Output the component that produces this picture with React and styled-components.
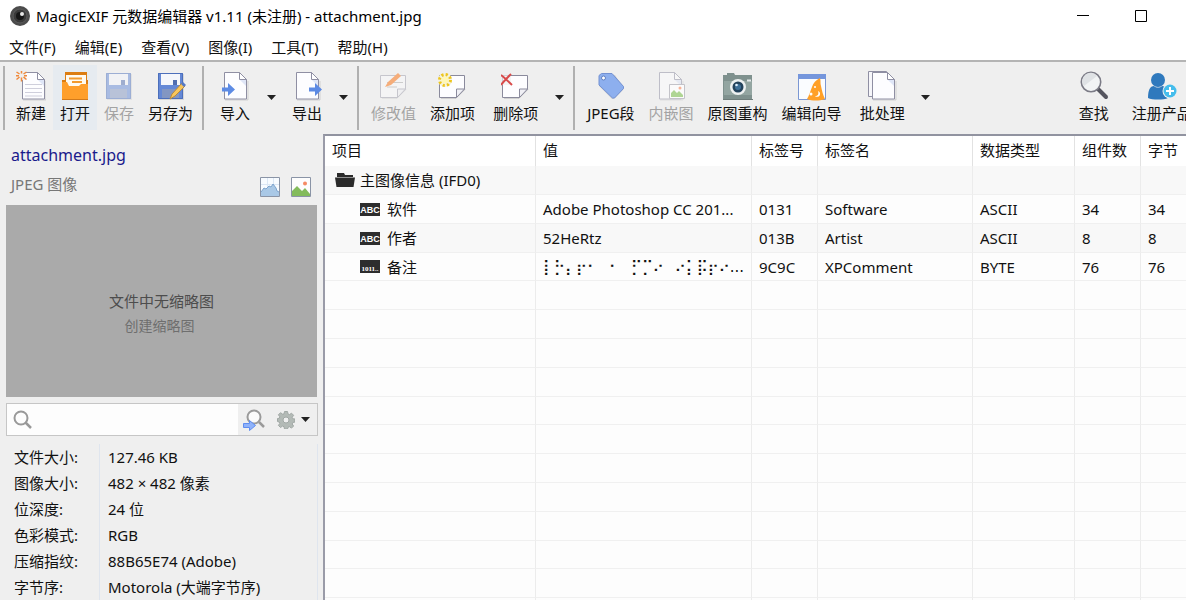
import React from "react";
import styled, { createGlobalStyle, css } from "styled-components";

const Global = createGlobalStyle`
  * { box-sizing: border-box; }
  body {
    margin: 0;
    background: #efefef;
    color: #111;
    font: 15px/20px "Noto Sans", "Noto Sans CJK SC", sans-serif;
  }
  button, input { font: inherit; color: inherit; }
`;

const Window = styled.div`
  height: 100vh;
  display: flex;
  flex-direction: column;
  overflow: hidden;
`;

const plainButton = css`
  margin: 0;
  padding: 0;
  border: 0;
  background: transparent;
  white-space: nowrap;
`;

const TitleBar = styled.header`
  flex: none;
  display: flex;
  align-items: center;
  height: 31px;
  padding: 0 16px 0 9px;
  background: #fff;
`;

const Title = styled.h1`
  margin: 0 0 0 5px;
  font-size: 15px;
  line-height: 20px;
  font-weight: 400;
  color: #000;
  flex: 1;
  white-space: nowrap;
`;

const CaptionButton = styled.button`
  ${plainButton}
  width: 58px;
  height: 31px;
  display: grid;
  place-items: center;
`;

const MenuBar = styled.nav`
  flex: none;
  display: flex;
  gap: 19px;
  height: 29px;
  padding: 2px 9px 0;
  align-items: center;
  background: #fff;
`;

const MenuItem = styled.button`
  ${plainButton}
`;

const Toolbar = styled.div`
  flex: none;
  display: flex;
  height: 74px;
  padding: 3px 0 4px 3px;
  border-top: 2px solid #b4b4b4;
  overflow: hidden;
`;

const Separator = styled.span`
  flex: none;
  width: 2px;
  margin: 1px ${(p) => p.$after}px 0 ${(p) => p.$before}px;
  background: #b0b0b0;
`;

const ToolButton = styled.button`
  ${plainButton}
  flex: none;
  display: flex;
  flex-direction: column;
  align-items: center;
  padding: 6px 7px 0;
  margin-left: ${(p) => p.$gap || 0}px;
  background: ${(p) => (p.$hot ? "#e6ebf0" : "transparent")};
  color: ${(p) => (p.disabled ? "#a3a3a3" : "#111")};
  svg { display: block; margin-bottom: 2px; }
`;

const DropButton = styled.button`
  ${plainButton}
  flex: none;
  width: 28px;
  display: grid;
  place-items: center;
`;

const Spacer = styled.span`
  flex: none;
  width: 132px;
`;

const Main = styled.main`
  flex: 1;
  min-height: 0;
  display: flex;
`;

const Side = styled.aside`
  flex: none;
  width: 323px;
  padding: 11px 5px 0 6px;
  overflow: hidden;
`;

const FileHead = styled.div`
  display: flex;
  justify-content: space-between;
  align-items: flex-end;
  height: 60px;
  padding: 0 6px 7px 5px;
`;

const FileName = styled.h2`
  margin: 0 0 9px;
  font-size: 16px;
  line-height: 20px;
  font-weight: 400;
  color: #1a1a8c;
`;

const FileKind = styled.p`
  margin: 0 0 4px;
  color: #777;
`;

const ViewButtons = styled.div`
  display: flex;
  gap: 10px;
`;

const ViewButton = styled.button`
  ${plainButton}
  svg { display: block; }
`;

const Thumb = styled.section`
  height: 192px;
  margin-right: 1px;
  background: #aaa;
  display: flex;
  flex-direction: column;
  justify-content: center;
  align-items: center;
  gap: 5px;
  padding-top: 24px;
  color: #4d4d4d;
`;

const CreateThumb = styled.button`
  ${plainButton}
  font-size: 14px;
  color: #6e6e6e;
  margin-right: 4px;
`;

const SearchBox = styled.div`
  display: flex;
  align-items: center;
  height: 33px;
  margin-top: 6px;
  border: 1px solid #c6c6c6;
`;

const SearchField = styled.label`
  flex: 1;
  min-width: 0;
  height: 31px;
  display: flex;
  align-items: center;
  gap: 6px;
  padding-left: 6px;
  background: #fdfdfd;
`;

const SearchInput = styled.input`
  flex: 1;
  min-width: 0;
  border: 0;
  padding: 0;
  outline: 0;
  background: transparent;
`;

const SearchTool = styled.button`
  ${plainButton}
  display: flex;
  align-items: center;
  gap: 6px;
  padding: 0 7px 0 5px;
`;

const Facts = styled.table`
  width: 312px;
  margin-top: 8px;
  border-collapse: separate;
  border-spacing: 0;
  border-right: 1px solid #dfe5ee;
  th, td {
    height: 26px;
    padding: 0 0 0 8px;
    text-align: left;
    font-weight: 400;
    white-space: nowrap;
  }
  th { width: 94px; border-right: 1px solid #dfe5ee; }
`;

const GridPanel = styled.section`
  flex: 1;
  min-width: 0;
  overflow: hidden;
  border-left: 2px solid #9a9ba8;
  border-top: 2px solid #9193a0;
  background: #fdfdfd;
`;

const Grid = styled.table`
  width: 100%;
  table-layout: fixed;
  border-collapse: separate;
  border-spacing: 0;
  th, td {
    padding: 0 0 0 7px;
    text-align: left;
    font-weight: 400;
    white-space: nowrap;
    overflow: hidden;
    border-right: 1px solid #ececec;
  }
  th { height: 30px; padding-bottom: 2px; background: #fff; border-right-color: #e2e2e2; }
  th:last-child, td:last-child { border-right: 0; }
`;

const Row = styled.tr`
  background: ${(p) => (p.$shaded ? "#f8f8f8" : "#fdfdfd")};
  td { height: 29px; border-bottom: 1px solid #f0f0f0; }
  &:nth-child(5n + 4) td { height: 28px; }
`;

const Tag = styled.span`
  display: flex;
  align-items: center;
  gap: ${(p) => (p.$child ? 7 : 5)}px;
  padding-left: ${(p) => (p.$child ? 28 : 3)}px;
`;

const Braille = styled.span`
  font-family: "DejaVu Sans", "Noto Sans", sans-serif;
`;

const Icon = ({ w = 30, h = 30, children }) => (
  <svg width={w} height={h} viewBox={`0 0 ${w} ${h}`} fill="none" aria-hidden="true">
    {children}
  </svg>
);

const Caret = () => (
  <Icon w={9} h={5}>
    <path d="M0 0h9L4.500 5z" fill="#222" />
  </Icon>
);

const Page = ({ x = 4, lines }) => (
  <g transform={`translate(${x} 1)`}>
    <path d="M1 28h23V9" stroke="#000" strokeOpacity=".12" />
    <path d="M.5.500h15l7 7v19.500H.5z" fill="#fdfdff" stroke="#8f8fa3" />
    <path d="M16 8l6 6V8z" fill="#dfe6f7" />
    <path d="M15.500.500v7h7z" fill="#fff" stroke="#8f8fa3" />
    {lines && <path d="M3 12.500h17M3 16.500h17M3 20.500h17M3 24h17" stroke="#cfcfdc" />}
  </g>
);

const Note = () => (
  <g>
    <path d="M3 27.500h15l9-9" stroke="#000" strokeOpacity=".13" />
    <path d="M1.500 4.500h25V18l-8 8.500h-17z" fill="#fdfdff" stroke="#8a8a9c" />
    <path d="M18.500 26.500V18h8z" fill="#f0f0f5" stroke="#8a8a9c" />
  </g>
);

const BlueArrow = ({ x }) => (
  <path transform={`translate(${x} 0)`} d="M0 16.500h6V12l7 6.500-7 6.500v-4.500H0z" fill="#5d8be4" />
);

const Floppy = () => (
  <>
    <path d="M3 3h25v26H3z" fill="#000" opacity=".1" />
    <path d="M2 2h25v26H2z" fill="#6488d6" />
    <path d="M2.500 2.500h24v25h-24z" stroke="#4c6fbb" />
    <path d="M5 3h19v11H5z" fill="#f4f6fb" />
    <path d="M17 9h4v5h-4z" fill="#4f6db0" />
    <path d="M6 18h17v9H6z" fill="#8296c2" />
  </>
);

const icons = {
  new: (
    <Icon>
      <Page x={6} lines />
      <path d="M0 0h10v9H0z" fill="#efefef" />
      <path d="M5.500-.500v3M5.500 6.500v4M.500 1l3 2M7.500 6l3 2.500M10.500 1l-3 2M3.500 6L.5 8.500M0 4.800h3M8 4.800h3" stroke="#f08a3c" strokeWidth="1.500" />
    </Icon>
  ),
  open: (
    <Icon>
      <path d="M5 1h22v8h1v20H2V9h3z" fill="#dc7d12" />
      <path d="M6 4h20v12H6z" fill="#fffaf0" />
      <path d="M9 7.500h13M12 11h10" stroke="#f29a2e" strokeWidth="2" />
      <path d="M2 11h5l2 4h10l2-2h7v16H2z" fill="#ff9f2b" />
      <path d="M2 28.500h26" stroke="#d27a1b" />
    </Icon>
  ),
  save: (
    <Icon>
      <g opacity=".5"><Floppy /></g>
    </Icon>
  ),
  saveAs: (
    <Icon>
      <Floppy />
      <path d="M14 28l2-5L26 12l3 3-10 10z" fill="#f8c65c" stroke="#b98a3a" />
      <path d="M25 13l2-2 3 3-2 2z" fill="#5479c8" />
    </Icon>
  ),
  import: (
    <Icon><Page x={4} /><BlueArrow x={2} /></Icon>
  ),
  export: (
    <Icon><Page x={4} /><BlueArrow x={17} /></Icon>
  ),
  edit: (
    <Icon>
      <g opacity=".4"><Note /><path d="M8 11.500h16M8 16h10" stroke="#999" /></g>
      <path d="M6 16l3-5L19 2l3 3-10 9z" fill="#f5ad7a" />
    </Icon>
  ),
  add: (
    <Icon>
      <Note />
      <circle cx="7" cy="9" r="7" fill="#f4f1dc" />
      <circle cx="7" cy="9" r="3.500" fill="#fff7b5" />
      <circle cx="7" cy="9" r="5.500" stroke="#edc51c" strokeWidth="3" strokeDasharray="2.160 2.160" />
    </Icon>
  ),
  remove: (
    <Icon>
      <Note />
      <path d="M0 3h10v11H0z" fill="#efefef" opacity=".7" />
      <path d="M0 4c4 3 7 6 11 10M10 3C6 7 3 10 0 14" stroke="#d84a4a" strokeWidth="2" />
    </Icon>
  ),
  segment: (
    <Icon>
      <path d="M4 5l4-2 11 1 9 13-1 2-9 9h-2L3 15z" fill="#000" opacity=".12" />
      <path d="M3 4.500L5.500 2.500h10.500L27.500 15.500v2L18.500 27h-2L3 14z" fill="#8dafee" stroke="#7391d2" />
      <circle cx="7.500" cy="7" r="2" fill="#fff" stroke="#6280c0" />
    </Icon>
  ),
  embedded: (
    <Icon>
      <g opacity=".5"><Page x={3} /></g>
      <path d="M13.500 13.500h15v14h-15z" fill="#fbfbfb" stroke="#c3c3c9" />
      <path d="M15 26v-4l3-3 3 3 2-2 4 4v2z" fill="#afd594" />
      <circle cx="24" cy="17" r="1.500" fill="#f7b397" />
    </Icon>
  ),
  rebuild: (
    <Icon>
      <path d="M4 2h7l1 2h17v25H0V4h4z" fill="#7f918e" />
      <path d="M1 10h28v14H1z" fill="#93a5a1" />
      <path d="M0 28.500h30" stroke="#6e7c7a" />
      <circle cx="15" cy="16" r="8" fill="#eef1f1" />
      <circle cx="15" cy="16" r="5.500" fill="#24435c" />
      <circle cx="15" cy="16" r="3" fill="#3f7199" />
      <circle cx="13.500" cy="14" r="1.300" fill="#dcefff" />
      <path d="M24 9.500h4" stroke="#e5eaea" strokeWidth="2" />
    </Icon>
  ),
  wizard: (
    <Icon>
      <path d="M1.500 3.500h27v25h-27z" fill="#fafcff" stroke="#7b97d3" />
      <path d="M1 3h28v5H1z" fill="#7596dc" />
      <path d="M10 28c2-3 3-7 5-12 1-4 4-7 8-9 1 3 0 5 1 8 1 5 2 9 4 13-6 2-13 2-18 0z" fill="#ffa028" />
      <circle cx="14" cy="23" r="1.500" fill="#fff" />
      <circle cx="18" cy="16" r="1" fill="#fff" />
      <path d="M21 20a3 3 0 1 1-3 5c3 0 4-2 3-5z" fill="#fff" />
    </Icon>
  ),
  batch: (
    <Icon>
      <path d="M1.500.500h18v25h-18z" fill="#f6f6fa" stroke="#8f8fa3" />
      <Page x={5} />
    </Icon>
  ),
  find: (
    <Icon>
      <path d="M19 18l8 8" stroke="#55555f" strokeWidth="4" strokeLinecap="round" />
      <circle cx="12" cy="11" r="9.700" fill="#f2f4f5" stroke="#7b7b86" strokeWidth="1.600" />
      <path d="M5 15A8 8 0 0 1 18 5z" fill="#dfe2e5" />
    </Icon>
  ),
  register: (
    <Icon>
      <circle cx="11" cy="9" r="7" fill="#2f79bd" />
      <path d="M1 27c0-8 2-12 6-12 2 2 6 2 8 0 4 0 6 4 6 12-4 2-16 2-20 0z" fill="#2f79bd" />
      <circle cx="23" cy="20" r="7.500" fill="#efefef" />
      <circle cx="23" cy="20" r="6.500" fill="#45bdec" />
      <path d="M23 16v8M19 20h8" stroke="#fff" strokeWidth="2" />
    </Icon>
  ),
};

const tools = [
  { sep: true, before: 0, after: 4 },
  { icon: "new", text: "新建" },
  { icon: "open", text: "打开", hot: true },
  { icon: "save", text: "保存", off: true },
  { icon: "saveAs", text: "另存为" },
  { sep: true, before: 2, after: 5 },
  { icon: "import", text: "导入", gap: 4, drop: true },
  { icon: "export", text: "导出", drop: true },
  { sep: true, before: 0, after: 5 },
  { icon: "edit", text: "修改值", off: true },
  { icon: "add", text: "添加项" },
  { icon: "remove", text: "删除项", gap: 4, drop: true },
  { sep: true, before: 0, after: 5 },
  { icon: "segment", text: "JPEG段" },
  { icon: "embedded", text: "内嵌图", off: true },
  { icon: "rebuild", text: "原图重构" },
  { icon: "wizard", text: "编辑向导" },
  { icon: "batch", text: "批处理", gap: 4, drop: true },
  { spacer: true },
  { icon: "find", text: "查找" },
  { icon: "register", text: "注册产品", gap: 9 },
];

const FolderIcon = () => (
  <Icon w={20} h={14}>
    <path d="M2 0h7l1 2h8v2H2z" fill="#2b2b2b" />
    <path d="M0 4.500h20L18.500 14h-17z" fill="#2b2b2b" />
  </Icon>
);

const TypeIcon = ({ text }) => (
  <svg width="20" height="13" viewBox="0 0 20 13" aria-hidden="true">
    <rect width="20" height="13" fill="#2d2d2d" />
    <text
      x="10"
      y={text === "ABC" ? 10 : 11}
      textAnchor="middle"
      fill="#fff"
      fontFamily={text === "ABC" ? "Liberation Sans, sans-serif" : "Liberation Serif, serif"}
      fontWeight="700"
      fontSize={text === "ABC" ? 9 : 7}
    >
      {text}
    </text>
  </svg>
);

const rows = [
  { folder: true, cells: ["主图像信息 (IFD0)", "", "", "", "", "", ""] },
  { type: "ABC", cells: ["软件", "Adobe Photoshop CC 201...", "0131", "Software", "ASCII", "34", "34"] },
  { type: "ABC", cells: ["作者", "52HeRtz", "013B", "Artist", "ASCII", "8", "8"] },
  {
    type: "1011..",
    cells: ["备注", <Braille key="b">⡇⡓⡄⡖⠂⠀⠂⠀⡋⡉⠔⠀⠔⡅⡯⡖⠔...</Braille>, "9C9C", "XPComment", "BYTE", "76", "76"],
  },
];

const facts = [
  ["文件大小:", "127.46 KB"],
  ["图像大小:", "482 × 482 像素"],
  ["位深度:", "24 位"],
  ["色彩模式:", "RGB"],
  ["压缩指纹:", "88B65E74 (Adobe)"],
  ["字节序:", "Motorola (大端字节序)"],
];

export default function App() {
  return (
    <Window>
      <Global />
      <TitleBar>
        <Icon w={22} h={22}>
          <circle cx="11" cy="11" r="10" fill="#4b4b4b" />
          <circle cx="11" cy="11" r="7" fill="#3a3a3a" stroke="#5c5c5c" />
          <circle cx="11" cy="11" r="4" fill="#161616" />
          <circle cx="13" cy="9" r="2" fill="#e8e8e8" />
        </Icon>
        <Title>MagicEXIF 元数据编辑器 v1.11 (未注册) - attachment.jpg</Title>
        <CaptionButton aria-label="最小化">
          <Icon w={12} h={12}><path d="M0 5.500h12" stroke="#000" /></Icon>
        </CaptionButton>
        <CaptionButton aria-label="最大化">
          <Icon w={12} h={12}><path d="M.500.500h11v11H.5z" stroke="#000" /></Icon>
        </CaptionButton>
      </TitleBar>
      <MenuBar>
        {["文件(F)", "编辑(E)", "查看(V)", "图像(I)", "工具(T)", "帮助(H)"].map((m) => (
          <MenuItem key={m}>{m}</MenuItem>
        ))}
      </MenuBar>
      <Toolbar>
        {tools.map((t, i) => {
          if (t.sep) return <Separator key={i} $before={t.before} $after={t.after} />;
          if (t.spacer) return <Spacer key={i} />;
          return (
            <React.Fragment key={i}>
              <ToolButton disabled={t.off} $hot={t.hot} $gap={t.gap}>
                {icons[t.icon]}
                {t.text}
              </ToolButton>
              {t.drop && (
                <DropButton aria-label={t.text}>
                  <Caret />
                </DropButton>
              )}
            </React.Fragment>
          );
        })}
      </Toolbar>
      <Main>
        <Side>
          <FileHead>
            <div>
              <FileName>attachment.jpg</FileName>
              <FileKind>JPEG 图像</FileKind>
            </div>
            <ViewButtons>
              <ViewButton aria-label="直方图">
                <Icon w={21} h={21}>
                  <path d="M.5.500h19v19H.5z" fill="#f7fbff" stroke="#8a94a6" />
                  <path d="M7.500 1v18M13.500 1v18M1 7.500h18" stroke="#dbe7f5" />
                  <path d="M1 19v-4l3-4 2 1 3-3 2 1 2-3 3 4 1 3 2 1v4z" fill="#a9c8e6" />
                  <path d="M1 15l3-4 2 1 3-3 2 1 2-3 3 4 1 3 2 1" stroke="#7ba3cd" />
                </Icon>
              </ViewButton>
              <ViewButton aria-label="缩略图">
                <Icon w={21} h={21}>
                  <path d="M.5.500h19v19H.5z" fill="#fdfdfd" stroke="#8a94a6" />
                  <path d="M1 19v-5l5-5 5 5 3-3 5 6v2z" fill="#83bb5b" />
                  <circle cx="14" cy="6.500" r="2" fill="#f58a63" />
                </Icon>
              </ViewButton>
            </ViewButtons>
          </FileHead>
          <Thumb>
            文件中无缩略图
            <CreateThumb>创建缩略图</CreateThumb>
          </Thumb>
          <SearchBox>
            <SearchField>
              <Icon w={20} h={20}>
                <circle cx="8" cy="8" r="6.500" stroke="#999" strokeWidth="2" />
                <path d="M12.500 12.500l5.500 5.500" stroke="#999" strokeWidth="2.500" />
              </Icon>
              <SearchInput aria-label="搜索" />
            </SearchField>
            <SearchTool aria-label="查找下一个">
              <Icon w={22} h={22}>
                <circle cx="11" cy="8" r="6.500" fill="#fafafa" stroke="#9a9a9a" strokeWidth="2" />
                <path d="M16 13l5 5" stroke="#9a9a9a" strokeWidth="2.500" />
                <path d="M.5 14.500h6v-3l6 5-6 5v-3h-6z" fill="#8fb2fa" stroke="#5f8df0" />
              </Icon>
            </SearchTool>
            <SearchTool aria-label="搜索选项">
              <Icon w={18} h={18}>
                <path
                  d="M7.500.500h3l.5 2.500 1.500.600 2-1.400 2.100 2.100-1.400 2 .6 1.500 2.200.200v3l-2.200.500-.6 1.500 1.400 2-2.100 2.100-2-1.400-1.500.600-.5 1.800h-3L7 15.700l-1.500-.600-2 1.400-2.100-2.100 1.400-2-.6-1.400L.5 10.500v-3l1.700-.200.6-1.500-1.400-2 2.100-2.100 2 1.400L7 3z"
                  fill="#b3bab6"
                  stroke="#a1a8a5"
                />
                <circle cx="9" cy="9" r="3" fill="#efefef" stroke="#a1a8a5" />
              </Icon>
              <Caret />
            </SearchTool>
          </SearchBox>
          <Facts>
            <tbody>
              {facts.map(([k, v]) => (
                <tr key={k}>
                  <th scope="row">{k}</th>
                  <td>{v}</td>
                </tr>
              ))}
            </tbody>
          </Facts>
        </Side>
        <GridPanel>
          <Grid>
            <colgroup>
              {[211, 216, 66, 155, 102, 66].map((w, i) => (
                <col key={i} width={w} />
              ))}
              <col />
            </colgroup>
            <thead>
              <tr>
                {["项目", "值", "标签号", "标签名", "数据类型", "组件数", "字节"].map((h) => (
                  <th key={h} scope="col">{h}</th>
                ))}
              </tr>
            </thead>
            <tbody>
              {rows.map((r, i) => (
                <Row key={i} $shaded={i % 2 === 0}>
                  {r.cells.map((c, j) => (
                    <td key={j}>
                      {j === 0 ? (
                        <Tag $child={!r.folder}>
                          {r.folder ? <FolderIcon /> : <TypeIcon text={r.type} />}
                          {c}
                        </Tag>
                      ) : (
                        c
                      )}
                    </td>
                  ))}
                </Row>
              ))}
              {Array.from({ length: 12 }, (_, i) => (
                <Row key={`empty${i}`}>
                  {Array.from({ length: 7 }, (_, j) => (
                    <td key={j} />
                  ))}
                </Row>
              ))}
            </tbody>
          </Grid>
        </GridPanel>
      </Main>
    </Window>
  );
}
